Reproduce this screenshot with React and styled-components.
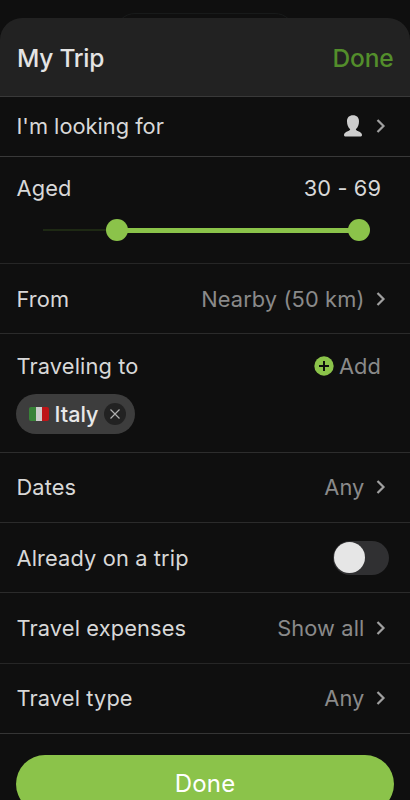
import React from "react";
import styled, { createGlobalStyle } from "styled-components";

const GlobalStyle = createGlobalStyle`
  * { box-sizing: border-box; }
  body { margin: 0; background: #0f0f0f; overflow: hidden; }
  button { font: inherit; letter-spacing: inherit; border: 0; padding: 0; background: none; color: inherit; }
`;

const Screen = styled.main`
  height: 800px;
  overflow: hidden;
  background: #0f0f0f;
  color: #d8d8d8;
  font: 400 21.8px/28px Inter, "Liberation Sans", sans-serif;
  letter-spacing: 0.13px;
`;

const Backdrop = styled.div`
  height: 18px;
  padding-top: 13px;
`;

const BackdropPill = styled.div`
  width: 180px;
  height: 40px;
  margin: 0 auto;
  border: 1px solid #181a1a;
  border-radius: 20px;
`;

const Sheet = styled.section`
  position: relative;
  display: flex;
  flex-direction: column;
  background: #0f0f0f;
  border-radius: 22px 22px 0 0;
  overflow: hidden;
`;

const Header = styled.header`
  display: flex;
  align-items: center;
  justify-content: space-between;
  height: 79px;
  padding: 2px 16.5px 0 17px;
  background: #222222;
  border-bottom: 1px solid #393939;
`;

const Title = styled.h1`
  margin: 0;
  font-size: 24.5px;
  font-weight: 500;
  letter-spacing: -0.25px;
  color: #e4e4e4;
`;

const HeaderAction = styled.button`
  && {
    font-size: 24.5px;
    font-weight: 500;
    letter-spacing: -0.15px;
    color: #538e2b;
  }
`;

const Row = styled.div`
  display: flex;
  align-items: center;
  justify-content: space-between;
  height: ${(p) => p.$height || 70}px;
  padding: 0 ${(p) => p.$right || 24}px ${(p) => p.$bottom ?? 1}px 16.5px;
  border-bottom: 1px solid ${(p) => p.$line || "#2b2b2b"};
`;

const Block = styled.div`
  height: ${(p) => p.$height}px;
  padding-top: ${(p) => p.$top}px;
  border-bottom: 1px solid ${(p) => p.$line};
`;

const BlockHead = styled.div`
  display: flex;
  align-items: center;
  justify-content: space-between;
  height: 28px;
  padding: 0 29px 0 16.5px;
`;

const Label = styled.span`
  letter-spacing: ${(p) => p.$tracking ?? 0.13}px;
  white-space: nowrap;
`;

const Value = styled.span`
  display: flex;
  align-items: center;
  gap: ${(p) => p.$gap || 11.5}px;
  color: #8a8a8a;
  white-space: nowrap;
`;

const AgeRange = styled.span`
  letter-spacing: 0.1px;
`;

const Slider = styled.div`
  display: flex;
  align-items: center;
  height: 22px;
  margin: 17px 40px 0 43px;
`;

const Track = styled.div`
  width: 63px;
  height: 2px;
  background: #1e2914;
`;

const Range = styled.div`
  flex: 1;
  height: 5px;
  margin: 0 -1px;
  background: #8bc34a;
`;

const Thumb = styled.div`
  width: 22px;
  height: 22px;
  border-radius: 50%;
  background: #8bc34a;
`;

const Chip = styled.div`
  display: inline-flex;
  align-items: center;
  width: 119px;
  height: 40px;
  margin: 14px 0 0 16px;
  padding: 0 9px 0 13px;
  border-radius: 20px;
  background: #3d3d3d;
`;

const ChipText = styled.span`
  flex: 1;
  margin-left: 5.5px;
  font-size: 21.6px;
  font-weight: 500;
  letter-spacing: 0;
  color: #e8e8e8;
`;

const ChipClose = styled.button`
  display: flex;
  align-items: center;
  justify-content: center;
  width: 22px;
  height: 22px;
  border-radius: 50%;
  && { background: #222222; }
`;

const FlagFrame = styled.div`
  display: flex;
  width: 20px;
  height: 14px;
  border-radius: 2px;
  overflow: hidden;
`;

const Stripe = styled.div`
  flex: 1;
  background: ${(p) => p.$color};
`;

const Switch = styled.button`
  display: flex;
  align-items: center;
  width: 56px;
  height: 34px;
  border-radius: 17px;
  && { padding: 0 1.5px; background: #303032; }
`;

const Knob = styled.span`
  width: 31px;
  height: 31px;
  border-radius: 50%;
  background: #e6e6e6;
`;

const Footer = styled.footer`
  padding: 21px 16px 24px;
`;

const DoneButton = styled.button`
  display: block;
  width: 100%;
  height: 58px;
  border-radius: 29px;
  && {
    background: #8bc34a;
    color: #ffffff;
    font-size: 24px;
    font-weight: 400;
    letter-spacing: 0.2px;
  }
`;

const Icon = styled.svg`
  display: block;
  flex: none;
`;

function Chevron() {
  return (
    <Icon width="10" height="14" viewBox="0 0 10 14" fill="none">
      <path d="M1.500 1 7.500 7 1.500 13" stroke="#a0a0a0" strokeWidth="2.200" />
    </Icon>
  );
}

const PersonIcon = styled(Icon)`
  margin-right: 2.5px;
`;

function Person() {
  return (
    <PersonIcon width="18" height="22" viewBox="0 0 18 22" fill="#cdcdcd">
      <path d="M9 .3C5.200.3 3 2.500 3 6.200c0 3.500 1 6 3.200 8C6.100 15.400 4.200 15.900 2.500 16.800 1 17.600 0 18.600 0 20c0 1.100.8 1.600 2 1.600h14c1.200 0 2-.5 2-1.600 0-1.400-1-2.400-2.500-3.200-1.700-.9-3.600-1.400-3.700-2.600 2.200-2 3.200-4.500 3.200-8C15 2.500 12.800.3 9 .3Z" />
    </PersonIcon>
  );
}

function Plus() {
  return (
    <Icon width="20" height="20" viewBox="0 0 20 20">
      <circle cx="10" cy="10" r="9.700" fill="#8bc34a" />
      <path d="M10 5v10M5 10h10" stroke="#0f0f0f" strokeWidth="2" />
    </Icon>
  );
}

function Cross() {
  return (
    <Icon width="10" height="10" viewBox="0 0 10 10">
      <path d="m.5.5 9 9m0-9-9 9" stroke="#b0b0b0" strokeWidth="1.200" />
    </Icon>
  );
}

function LinkRow({ label, value, tracking, ...row }) {
  return (
    <Row {...row}>
      <Label $tracking={tracking}>{label}</Label>
      <Value>
        {value}
        <Chevron />
      </Value>
    </Row>
  );
}

export default function App() {
  return (
    <Screen>
      <GlobalStyle />
      <Backdrop>
        <BackdropPill />
      </Backdrop>
      <Sheet>
        <Header>
          <Title>My Trip</Title>
          <HeaderAction>Done</HeaderAction>
        </Header>
        <LinkRow label="I'm looking for" value={<Person />} tracking={0} $height={60} $line="#393939" />
        <Block $height={107} $top={17} $line="#262626">
          <BlockHead>
            <Label>Aged</Label>
            <AgeRange>30 - 69</AgeRange>
          </BlockHead>
          <Slider>
            <Track />
            <Thumb />
            <Range />
            <Thumb />
          </Slider>
        </Block>
        <LinkRow label="From" value="Nearby (50 km)" $bottom={0} />
        <Block $height={119} $top={18} $line="#2d2d2d">
          <BlockHead>
            <Label>Traveling to</Label>
            <Value $gap={5}>
              <Plus />
              Add
            </Value>
          </BlockHead>
          <Chip>
            <FlagFrame>
              <Stripe $color="#398339" />
              <Stripe $color="#cccccc" />
              <Stripe $color="#bd1518" />
            </FlagFrame>
            <ChipText>Italy</ChipText>
            <ChipClose aria-label="Remove Italy">
              <Cross />
            </ChipClose>
          </Chip>
        </Block>
        <LinkRow label="Dates" value="Any" />
        <Row $right={21.5} $bottom={0}>
          <Label>Already on a trip</Label>
          <Switch role="switch" aria-checked="false" aria-label="Already on a trip">
            <Knob />
          </Switch>
        </Row>
        <LinkRow label="Travel expenses" value="Show all" $height={71} $line="#262626" />
        <LinkRow label="Travel type" value="Any" $line="#353535" />
        <Footer>
          <DoneButton>Done</DoneButton>
        </Footer>
      </Sheet>
    </Screen>
  );
}
